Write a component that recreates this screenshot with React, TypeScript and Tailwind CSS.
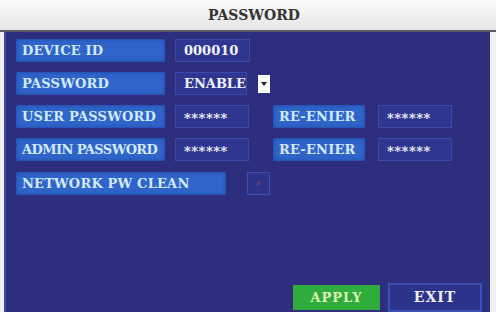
import React from "react";

function Label({ text, w, tight }: { text: string; w: string; tight?: boolean }) {
  return (
    <div
      className={`${w} h-[23px] flex items-center pl-[6px] whitespace-nowrap bg-[#2f65c9] text-[#d2eaff] text-[13px] font-bold ${
        tight ? "tracking-[-0.6px]" : "tracking-[0.2px]"
      } shadow-[inset_0_0_4px_rgba(20,40,140,0.6)]`}
    >
      {text}
    </div>
  );
}

function Value({ text, w, stars }: { text: string; w: string; stars?: boolean }) {
  return (
    <div
      className={`${w} h-[23px] flex items-center pl-[8px] whitespace-nowrap bg-[#2f3690] border border-[#3a4aa8] text-[#f0f3ff] font-bold ${
        stars ? "text-[13px] tracking-[0.5px] pt-[4px]" : "text-[13px]"
      }`}
    >
      {text}
    </div>
  );
}

export default function App() {
  return (
    <div className="w-[496px] h-[312px] bg-[#efefef] flex flex-col overflow-hidden font-['DejaVu_Serif',serif]">
      <div className="h-[32px] shrink-0 flex items-center justify-center bg-gradient-to-b from-[#fafafa] to-[#e6e6e6] border-b-2 border-[#5a5a66] text-[#333] text-[14px] font-bold pl-[12px]">
        PASSWORD
      </div>
      <div className="flex-1 ml-[4px] mr-[6px] bg-[#2d2e7e] border-l-2 border-[#3a4db0] flex flex-col pt-[7px] pl-[10px]">
        <div className="flex flex-col gap-[10px]">
          <div className="flex items-center gap-[10px]">
            <Label text="DEVICE ID" w="w-[149px]" />
            <Value text="000010" w="w-[75px]" />
          </div>
          <div className="flex items-center gap-[10px]">
            <Label text="PASSWORD" w="w-[149px]" />
            <Value text="ENABLE" w="w-[72px]" />
            <div className="ml-[1px] w-[12px] h-[18px] bg-white flex items-center justify-center">
              <div className="w-0 h-0 border-l-[3px] border-r-[3px] border-t-[4px] border-l-transparent border-r-transparent border-t-[#222]" />
            </div>
          </div>
          <div className="flex items-center gap-[10px]">
            <Label text="USER PASSWORD" w="w-[149px]" />
            <Value text="******" w="w-[74px]" stars />
            <div className="ml-[14px]">
              <Label text="RE-ENIER" w="w-[92px]" />
            </div>
            <div className="ml-[3px]">
              <Value text="******" w="w-[74px]" stars />
            </div>
          </div>
          <div className="flex items-center gap-[10px]">
            <Label text="ADMIN PASSWORD" w="w-[149px]" tight />
            <Value text="******" w="w-[74px]" stars />
            <div className="ml-[14px]">
              <Label text="RE-ENIER" w="w-[92px]" />
            </div>
            <div className="ml-[3px]">
              <Value text="******" w="w-[74px]" stars />
            </div>
          </div>
          <div className="flex items-center gap-[21px] mt-[1px]">
            <Label text="NETWORK PW CLEAN" w="w-[210px]" />
            <div className="w-[23px] h-[23px] bg-[#2c3388] border border-[#3c4fb0] flex items-center justify-center">
              <div className="w-[3px] h-[3px] bg-[#6a3a70]" />
            </div>
          </div>
        </div>
        <div className="mt-auto flex items-end justify-end gap-[8px] pr-[8px]">
          <div className="w-[87px] h-[25px] mb-[2px] bg-[#30ac3c] flex items-center justify-center text-[#dcf5b8] text-[13px] font-bold tracking-[1px]">
            APPLY
          </div>
          <div className="w-[94px] h-[29px] bg-[#2c3388] border-2 border-[#3a50b4] flex items-center justify-center text-[#eceef8] text-[14px] font-bold tracking-[1px]">
            EXIT
          </div>
        </div>
      </div>
    </div>
  );
}
